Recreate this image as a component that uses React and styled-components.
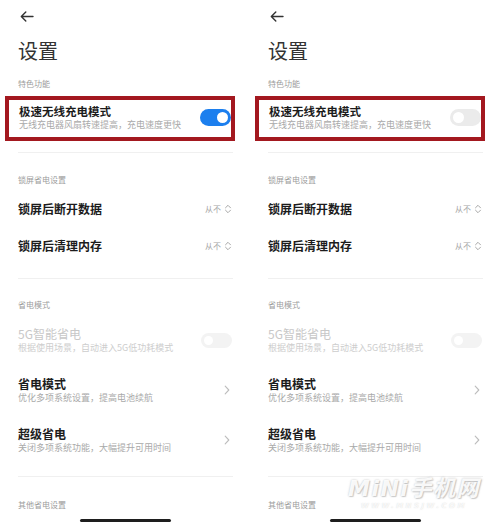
import React from "react";
import styled, { createGlobalStyle } from "styled-components";

const Global = createGlobalStyle`
  html, body { margin: 0; padding: 0; background: #fff; }
  body { font-family: "Noto Sans CJK SC", "Noto Sans", sans-serif; }
`;

const Screen = styled.div`
  display: flex;
  width: 500px;
  height: 529px;
  overflow: hidden;
  background: #fff;
`;

const Panel = styled.div`
  position: relative;
  width: 250px;
  height: 529px;
  box-sizing: border-box;
  padding: 0 18px;
  display: flex;
  flex-direction: column;
  overflow: hidden;
`;

const TopBar = styled.div`
  height: 22px;
  padding-top: 11px;
  box-sizing: border-box;
  padding-left: 2px;
  display: flex;
  align-items: flex-start;
`;

const PageTitle = styled.h1`
  margin: 16px 0 0;
  font-size: 20px;
  line-height: 26px;
  font-weight: 400;
  color: #333;
`;

const SectionHeader = styled.div`
  margin-top: ${(p) => p.$mt}px;
  font-size: 8px;
  line-height: 11px;
  color: #9c9c9c;
`;

const Highlight = styled.div`
  margin: 7px -3px 0 -13px;
  border: 4px solid #a3181f;
  padding: 3px 0 6px 10px;
  display: flex;
  align-items: center;
  justify-content: space-between;
`;

const Divider = styled.div`
  margin-top: ${(p) => p.$mt}px;
  height: 1px;
  background: #f0f0f0;
  margin-right: -1px;
`;

const ValueRow = styled.div`
  height: 37px;
  display: flex;
  align-items: center;
  justify-content: space-between;
  margin-top: ${(p) => p.$mt || 0}px;
`;

const ToggleRow = styled.div`
  height: 50px;
  display: flex;
  align-items: center;
  justify-content: space-between;
  margin-top: ${(p) => p.$mt || 0}px;
`;

const TextBlock = styled.div`
  display: flex;
  flex-direction: column;
`;

const RowTitle = styled.div`
  font-size: ${(p) => (p.$big ? 12 : 11.5)}px;
  line-height: 16px;
  font-weight: ${(p) => (p.$disabled ? 400 : 700)};
  color: ${(p) => (p.$disabled ? "#c8c8c8" : "#1c1c1c")};
`;

const RowSub = styled.div`
  font-size: 9px;
  line-height: 12px;
  color: ${(p) => (p.$disabled ? "#cdcdcd" : "#a9a9a9")};
  white-space: nowrap;
`;

const Value = styled.div`
  display: flex;
  align-items: center;
  gap: 3px;
  font-size: 8px;
  color: #a6a6a6;
`;

const Switch = styled.div`
  width: 31px;
  height: ${(p) => (p.$disabled ? 15 : 17)}px;
  border-radius: 9px;
  background: ${(p) => (p.$on ? "#1c7fee" : p.$disabled ? "#f3f3f3" : "#ebebeb")};
  display: flex;
  align-items: center;
  justify-content: ${(p) => (p.$on ? "flex-end" : "flex-start")};
  padding: 0 3px;
  box-sizing: border-box;
  flex-shrink: 0;
`;

const Knob = styled.div`
  width: ${(p) => (p.$small ? 9 : 11)}px;
  height: ${(p) => (p.$small ? 9 : 11)}px;
  border-radius: 50%;
  background: #fff;
`;

const HomeBar = styled.div`
  margin-top: 9px;
  align-self: center;
  width: 91px;
  height: 3px;
  border-radius: 2px;
  background: #1e1e1e;
`;

const Watermark = styled.div`
  position: absolute;
  left: 98px;
  top: 476px;
  display: flex;
  flex-direction: column;
  align-items: center;
  pointer-events: none;
`;

const WmMain = styled.div`
  font-family: "DejaVu Sans", "Noto Sans CJK SC", sans-serif;
  font-size: 22px;
  font-weight: 700;
  font-style: italic;
  color: rgba(255, 255, 255, 0.92);
  letter-spacing: 1.5px;
  text-shadow: 0 0 2px rgba(150, 150, 150, 0.6), 1px 1px 1px rgba(170, 170, 170, 0.5);
  line-height: 26px;
`;

const WmSub = styled.div`
  font-family: "DejaVu Sans", sans-serif;
  font-size: 7px;
  font-weight: 700;
  font-style: italic;
  letter-spacing: 2.5px;
  color: rgba(255, 255, 255, 0.8);
  text-shadow: 0 0 1px rgba(180, 180, 180, 0.5);
  line-height: 9px;
`;

const BackArrow = () => (
  <svg width="14" height="11" viewBox="0 0 14 11" fill="none">
    <path d="M13 5.5H1.5M5.8 1L1.3 5.5 5.8 10" stroke="#333" strokeWidth="1.4" strokeLinecap="round" strokeLinejoin="round" />
  </svg>
);

const UpDown = () => (
  <svg width="8" height="10" viewBox="0 0 8 10" fill="none">
    <path d="M1.5 3.8L4 1.3 6.5 3.8M1.5 6.2L4 8.7 6.5 6.2" stroke="#a8a8a8" strokeWidth="1" strokeLinecap="round" strokeLinejoin="round" />
  </svg>
);

const ChevronIcon = styled.svg`
  margin-right: 2px;
`;

const Chevron = () => (
  <ChevronIcon width="6" height="10" viewBox="0 0 6 10" fill="none">
    <path d="M1.2 1.2L4.8 5 1.2 8.8" stroke="#bdbdbd" strokeWidth="1.1" strokeLinecap="round" strokeLinejoin="round" />
  </ChevronIcon>
);

const SettingsPanel = ({ fastOn, watermark }) => (
  <Panel>
    <TopBar>
      <BackArrow />
    </TopBar>
    <PageTitle>设置</PageTitle>
    <SectionHeader $mt={14}>特色功能</SectionHeader>
    <Highlight>
      <TextBlock>
        <RowTitle>极速无线充电模式</RowTitle>
        <RowSub>无线充电器风扇转速提高，充电速度更快</RowSub>
      </TextBlock>
      <Switch $on={fastOn}>
        <Knob />
      </Switch>
    </Highlight>
    <Divider $mt={11} />
    <SectionHeader $mt={21}>锁屏省电设置</SectionHeader>
    <ValueRow $mt={5}>
      <RowTitle $big>锁屏后断开数据</RowTitle>
      <Value>
        从不 <UpDown />
      </Value>
    </ValueRow>
    <ValueRow>
      <RowTitle $big>锁屏后清理内存</RowTitle>
      <Value>
        从不 <UpDown />
      </Value>
    </ValueRow>
    <Divider $mt={14} />
    <SectionHeader $mt={20}>省电模式</SectionHeader>
    <ToggleRow $mt={5}>
      <TextBlock>
        <RowTitle $big $disabled>5G智能省电</RowTitle>
        <RowSub $disabled>根据使用场景，自动进入5G低功耗模式</RowSub>
      </TextBlock>
      <Switch $disabled>
        <Knob $small />
      </Switch>
    </ToggleRow>
    <ToggleRow>
      <TextBlock>
        <RowTitle $big>省电模式</RowTitle>
        <RowSub>优化多项系统设置，提高电池续航</RowSub>
      </TextBlock>
      <Chevron />
    </ToggleRow>
    <ToggleRow>
      <TextBlock>
        <RowTitle $big>超级省电</RowTitle>
        <RowSub>关闭多项系统功能，大幅提升可用时间</RowSub>
      </TextBlock>
      <Chevron />
    </ToggleRow>
    <Divider $mt={11} />
    <SectionHeader $mt={22}>其他省电设置</SectionHeader>
    <HomeBar />
    {watermark && (
      <Watermark>
        <WmMain>MiNi手机网</WmMain>
        <WmSub>WWW.MNSJW.COM</WmSub>
      </Watermark>
    )}
  </Panel>
);

export default function App() {
  return (
    <>
      <Global />
      <Screen>
        <SettingsPanel fastOn />
        <SettingsPanel fastOn={false} watermark />
      </Screen>
    </>
  );
}
